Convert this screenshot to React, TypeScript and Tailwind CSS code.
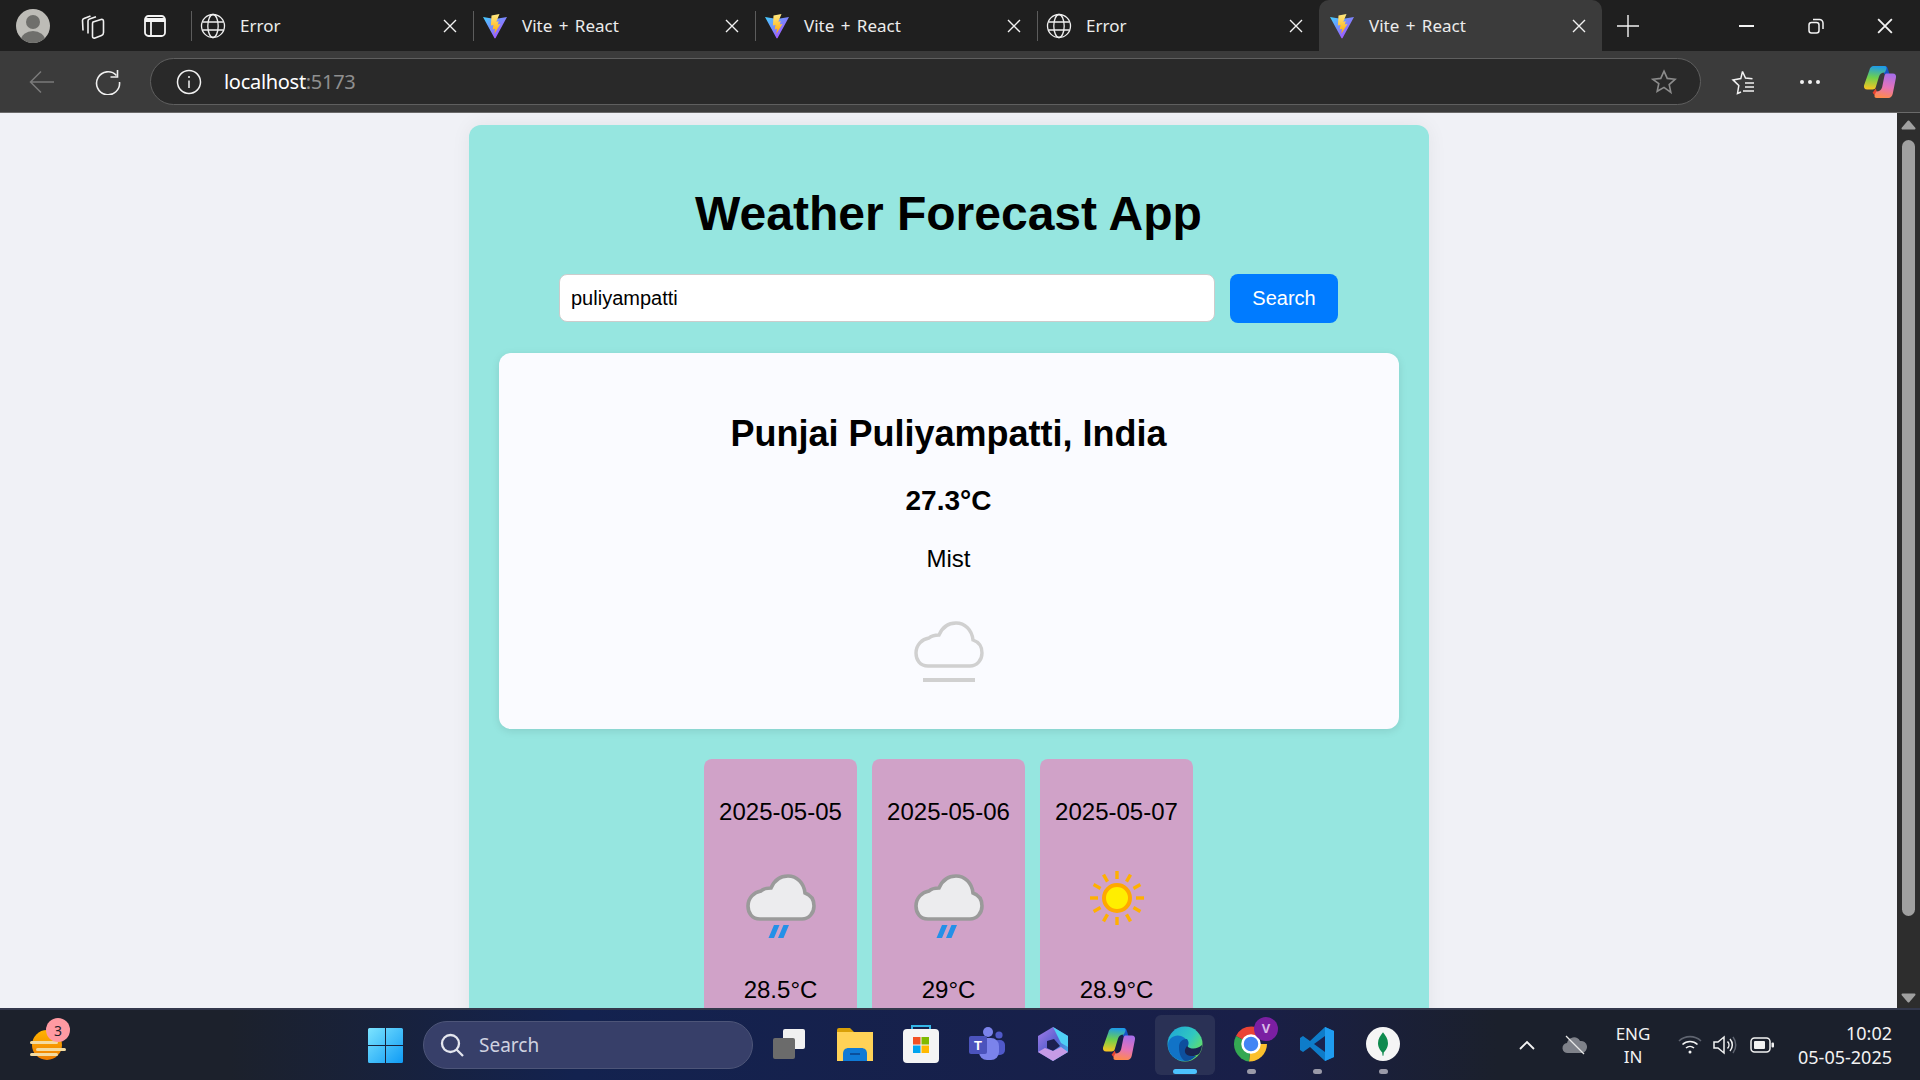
import type { ReactNode } from "react";

const FORECAST = [
  { date: "2025-05-05", temp: "28.5°C", icon: "rain" },
  { date: "2025-05-06", temp: "29°C", icon: "rain" },
  { date: "2025-05-07", temp: "28.9°C", icon: "sun" },
];

const TABS = [
  { title: "Error", kind: "globe" },
  { title: "Vite + React", kind: "vite" },
  { title: "Vite + React", kind: "vite" },
  { title: "Error", kind: "globe" },
];

// 68x45 cloud outline shared by the main card and the forecast cards
const CLOUD_PATH =
  "M13 44C5 44 1 38 1 31 1 23 7 17 14 16 16 14 20 13 24 13 27 6 33 1 41 1 50 1 57 8 58 18 64 20 67 25 67 31 67 38 62 44 55 44Z";

function GlobeIcon() {
  return (
    <svg width="26" height="26" viewBox="0 0 26 26" fill="none" stroke="#f0f0f0" strokeWidth="1.3">
      <circle cx="13" cy="13" r="11.5" />
      <ellipse cx="13" cy="13" rx="5.2" ry="11.5" />
      <path d="M2.5 9h21M2.5 17h21" />
    </svg>
  );
}

function ViteIcon() {
  return (
    <svg width="26" height="26" viewBox="0 0 26 26">
      <defs>
        <linearGradient id="viteA" x1="0" y1="0" x2="1" y2="1">
          <stop offset="0" stopColor="#41d1ff" />
          <stop offset="1" stopColor="#bd34fe" />
        </linearGradient>
        <linearGradient id="viteB" x1="0" y1="0" x2="0" y2="1">
          <stop offset="0" stopColor="#ffea83" />
          <stop offset="1" stopColor="#ffa800" />
        </linearGradient>
      </defs>
      <path d="M1 4l12 2 12-2-11.4 21a.7.7 0 0 1-1.2 0z" fill="url(#viteA)" />
      <path d="M17.5 1l-8 1.5-.6 10 2.6-.5-.8 4.4 2.5-.6-1 5.2 6.3-10-2.8.5 1-3.2-2.4.4z" fill="url(#viteB)" />
    </svg>
  );
}

function CloseGlyph({ size = 14, width = 1.4 }: { size?: number; width?: number }) {
  return (
    <svg width={size} height={size} viewBox="0 0 14 14" stroke="#f2f2f2" strokeWidth={width} fill="none">
      <path d="M1 1l12 12M13 1L1 13" />
    </svg>
  );
}

function Tab({ title, kind, active }: { title: string; kind: string; active?: boolean }) {
  return (
    <div
      className={
        active
          ? "flex h-[51px] w-[283px] shrink-0 items-center rounded-t-[10px] bg-[#3b3b3b] pl-[10px] pr-[6px]"
          : "relative flex h-[51px] w-[282px] shrink-0 items-center pl-[9px] pr-[6px]"
      }
    >
      {!active && <div className="absolute left-0 top-[11px] h-[30px] w-px bg-[#5c5c5c]" />}
      {kind === "vite" ? <ViteIcon /> : <GlobeIcon />}
      <span className="ml-[14px] flex-1 text-[17px] leading-none [word-spacing:2px] text-[#ececec]">{title}</span>
      <span className="mr-[6px] flex w-[22px] justify-center">
        <CloseGlyph />
      </span>
    </div>
  );
}

function Copilot({ size, id }: { size: number; id: string }) {
  return (
    <svg width={size} height={size} viewBox="0 0 32 32">
      <defs>
        <linearGradient id={`${id}A`} x1="0.5" y1="0" x2="0.4" y2="1">
          <stop offset="0" stopColor="#1e9be8" />
          <stop offset="0.5" stopColor="#6fd04c" />
          <stop offset="1" stopColor="#f7c522" />
        </linearGradient>
        <linearGradient id={`${id}B`} x1="0.6" y1="0" x2="0.4" y2="1">
          <stop offset="0" stopColor="#a86ee8" />
          <stop offset="0.55" stopColor="#e573b8" />
          <stop offset="1" stopColor="#ff8a4c" />
        </linearGradient>
      </defs>
      <path d="M18 1h2c2 0 3 1 3.500 3l1.500 5h-5z" fill="#1553c7" />
      <path d="M9 26l3-4 3 9c-2 0-3-1-3.500-2z" fill="#e8432e" />
      <path d="M10 1h10c2 0 2.500 1 2 3l-1.500 3c-3 0-4.500 1-5.500 4l-3 10c-.5 1.500-1.500 2-3 2H4c-2.500 0-3.500-1.500-3-4L6 5c.5-2.500 2-4 4-4z" fill={`url(#${id}A)`} />
      <path d="M22 8h6c2.500 0 3.500 1.500 3 4l-3 15c-.5 2.500-2 4-4 4H13c-2 0-2.500-1-2-3l1.500-3c3 0 4.500-1 5.500-4l2-10c.3-1.500 1-3 2-3z" fill={`url(#${id}B)`} />
    </svg>
  );
}

function TabStrip() {
  return (
    <div className="flex h-[51px] shrink-0 items-center bg-[#1f1f1f]">
      <div className="flex w-[191px] shrink-0 items-center">
        <div className="ml-[16px] flex h-[34px] w-[34px] items-end justify-center overflow-hidden rounded-full bg-[#bdbcb7]">
          <svg width="34" height="34" viewBox="0 0 34 34" fill="#6f6f6c">
            <circle cx="17" cy="13" r="7" />
            <ellipse cx="17" cy="31" rx="12" ry="9" />
          </svg>
        </div>
        <svg className="ml-[29px]" width="26" height="26" viewBox="0 0 26 26" fill="none" stroke="#f0f0f0" strokeWidth="1.6">
          <path d="M14 9l8-2.500c1.500-.5 2.500.3 2.500 2v11c0 1.500-.7 2.500-2 3l-6.500 2.500c-1.500.5-2.500-.2-2.500-1.800V11c0-1 .3-1.700.5-2z" />
          <path d="M9 20.500V8c0-1 .5-1.800 1.500-2.100L17 3.700" />
          <path d="M4 17.500L3.500 7.500c0-1 .5-1.600 1.500-2L11.500 3" />
        </svg>
        <svg className="ml-[38px]" width="24" height="24" viewBox="0 0 24 24" fill="none" stroke="#f4f4f4" strokeWidth="1.8">
          <rect x="2" y="2" width="20" height="20" rx="3.500" />
          <path d="M2 6h20" strokeWidth="4" />
          <path d="M8 8v14" />
        </svg>
      </div>
      {TABS.map((tab, i) => (
        <Tab key={i} title={tab.title} kind={tab.kind} />
      ))}
      <Tab title="Vite + React" kind="vite" active />
      <svg className="ml-[15px]" width="22" height="22" viewBox="0 0 22 22" stroke="#f2f2f2" strokeWidth="1.4">
        <path d="M11 0v22M0 11h22" />
      </svg>
      <div className="ml-auto flex items-center">
        <span className="flex w-[69px] justify-center">
          <span className="block h-[2px] w-[15px] bg-[#f2f2f2]" />
        </span>
        <span className="flex w-[69px] justify-center">
          <svg width="16" height="16" viewBox="0 0 16 16" fill="none" stroke="#f2f2f2" strokeWidth="1.5">
            <rect x="1" y="4.500" width="10" height="10.500" rx="2.500" />
            <path d="M5 1.500h6.500A3.500 3.500 0 0 1 15 5v6" />
          </svg>
        </span>
        <span className="flex w-[70px] justify-center pr-[1px]">
          <CloseGlyph size={16} width={1.6} />
        </span>
      </div>
    </div>
  );
}

function Toolbar() {
  return (
    <div className="flex h-[62px] shrink-0 items-center border-b border-b-[#6a6a6a] bg-[#3b3b3b]">
      <span className="flex w-[84px] justify-center">
        <svg width="26" height="26" viewBox="0 0 26 26" fill="none" stroke="#7a7a7a" strokeWidth="1.5">
          <path d="M25 13H1.500M12 2.500L1.500 13 12 23.500" />
        </svg>
      </span>
      <span className="flex w-[48px] justify-center">
        <svg width="26" height="26" viewBox="0 0 26 26" fill="none" stroke="#f0f0f0" strokeWidth="1.6">
          <path d="M21.500 6.500A11.500 11.500 0 1 0 24.500 13" />
          <path d="M22.500 1v7h-7" />
        </svg>
      </span>
      <div className="ml-[18px] flex h-[47px] w-[1551px] items-center rounded-full border border-[#5f5f5f] bg-[#292929]">
        <svg className="ml-[25px]" width="26" height="26" viewBox="0 0 26 26" fill="none" stroke="#f2f2f2" strokeWidth="1.5">
          <circle cx="13" cy="13" r="11.500" />
          <path d="M13 11.500V19M13 7v2" />
        </svg>
        <span className="ml-[22px] text-[20px] tracking-[-0.3px] text-white">
          localhost<span className="text-[#8f8f8f]">:5173</span>
        </span>
        <svg className="ml-auto mr-[23px]" width="26" height="26" viewBox="0 0 24 24" fill="none" stroke="#8c8c8c" strokeWidth="1.5">
          <path d="M12 2l3 6.700 7.200.8-5.400 4.900 1.500 7.200L12 17l-6.300 3.600 1.500-7.200L1.800 9.500 9 8.700z" />
        </svg>
      </div>
      <svg className="ml-[29px]" width="26" height="26" viewBox="0 0 26 26" fill="none" stroke="#f2f2f2" strokeWidth="1.5">
        <path d="M12.500 2.500l3 6.500 7 .8M11 23l-3.500 1.500 1.300-8-5.800-5.600 7.800-1.300L12.500 2.500M15 14h9M15 18h9M13 22h11" />
      </svg>
      <span className="ml-[44px] flex gap-[4px]">
        <span className="h-[4px] w-[4px] rounded-full bg-[#f2f2f2]" />
        <span className="h-[4px] w-[4px] rounded-full bg-[#f2f2f2]" />
        <span className="h-[4px] w-[4px] rounded-full bg-[#f2f2f2]" />
      </span>
      <span className="ml-[43px]">
        <Copilot size={34} id="copTool" />
      </span>
    </div>
  );
}

function RainIcon() {
  return (
    <svg width="68" height="64" viewBox="0 0 68 64" className="mt-[25px] overflow-visible">
      <path d={CLOUD_PATH} fill="#ececee" stroke="#9a9a9a" strokeWidth="3.600" />
      <path d="M27 50h5.500L27 63h-5.500zM36.500 50H42L36.500 63H31z" fill="#2490e8" />
    </svg>
  );
}

function SunIcon() {
  const angles = [0, 30, 60, 90, 120, 150, 180, 210, 240, 270, 300, 330];
  return (
    <svg width="56" height="56" viewBox="0 0 56 56" className="mt-[20px]">
      {angles.map((a) => (
        <rect key={a} x="26.300" y="1" width="3.400" height="8" fill="#ffb000" transform={`rotate(${a} 28 28)`} />
      ))}
      <circle cx="28" cy="28" r="13" fill="#ffee00" stroke="#ffa800" strokeWidth="4" />
    </svg>
  );
}

function ForecastCard({ date, temp, icon }: { date: string; temp: string; icon: string }) {
  return (
    <div className="flex w-[153px] shrink-0 flex-col items-center rounded-[8px] bg-[#d0a2c8] pb-[30px] pt-[39px] text-center text-[24px] leading-[1.15] text-black">
      <p>{date}</p>
      <div className="mt-[24px] flex h-[100px] w-[100px] items-start justify-center">
        {icon === "sun" ? <SunIcon /> : <RainIcon />}
      </div>
      <p className="mt-[26px]">{temp}</p>
    </div>
  );
}

function WeatherApp() {
  return (
    <div className="mx-auto mt-[12px] w-[960px] rounded-[12px] bg-[#96e6e0] px-[30px] pb-[30px] pt-[61px] text-center font-['Liberation_Sans',Arial,sans-serif] text-black shadow-[0_0_20px_rgba(0,0,0,0.06)]">
      <h1 className="text-[48px] font-bold leading-[1.15]">Weather Forecast App</h1>
      <div className="mt-[33px] flex justify-center gap-[15px]">
        <input
          readOnly
          value="puliyampatti"
          className="h-[48px] w-[656px] rounded-[8px] border border-[#cccccc] bg-white px-[11px] text-[20px] text-black outline-none"
        />
        <button className="h-[49px] w-[108px] rounded-[8px] bg-[#007bff] pb-[1px] text-[20px] text-white">Search</button>
      </div>
      <div className="mt-[30px] flex h-[376px] flex-col items-center rounded-[12px] bg-[#fafbff] pt-[60px] shadow-[0_2px_8px_rgba(0,0,0,0.1)]">
        <h2 className="text-[36px] font-bold leading-[1.15]">Punjai Puliyampatti, India</h2>
        <p className="mt-[30px] text-[28px] font-bold leading-[1.15]">27.3°C</p>
        <p className="mt-[28px] text-[24px] leading-[1.15]">Mist</p>
        <svg className="mt-[28px]" width="100" height="100" viewBox="0 0 100 100" fill="none" stroke="#d0d0d0">
          <path d={CLOUD_PATH} transform="translate(16 22)" strokeWidth="3.400" />
          <path d="M24 80h52" strokeWidth="4" />
        </svg>
      </div>
      <div className="mt-[30px] flex justify-center gap-[15px]">
        {FORECAST.map((day) => (
          <ForecastCard key={day.date} {...day} />
        ))}
      </div>
    </div>
  );
}

function Scrollbar() {
  return (
    <div className="flex w-[23px] shrink-0 flex-col items-center bg-[#2d2d2d]">
      <svg className="mt-[7px]" width="15" height="10" viewBox="0 0 15 10" fill="#a0a0a0" stroke="#a0a0a0" strokeWidth="2" strokeLinejoin="round">
        <path d="M7.500 1.500L1.500 8.500h12z" />
      </svg>
      <span className="mt-[10px] h-[776px] w-[13px] rounded-full bg-[#a0a0a0]" />
      <svg className="mt-[77px]" width="15" height="10" viewBox="0 0 15 10" fill="#a0a0a0" stroke="#a0a0a0" strokeWidth="2" strokeLinejoin="round">
        <path d="M7.500 8.500L1.500 1.500h12z" />
      </svg>
    </div>
  );
}

function TaskIcon({ children, active, dot }: { children: ReactNode; active?: boolean; dot?: boolean }) {
  return (
    <div className="relative flex h-[60px] w-[66px] shrink-0 items-center justify-center pb-[2px]">
      {active && <div className="absolute inset-x-[3px] inset-y-0 rounded-[6px] bg-[#2a3155]" />}
      <div className="relative flex items-center justify-center">{children}</div>
      {active && <div className="absolute bottom-[1px] h-[5px] w-[24px] rounded-full bg-[#4cc2ff]" />}
      {dot && <div className="absolute bottom-[1px] h-[5px] w-[9px] rounded-full bg-[#9a9aa8]" />}
    </div>
  );
}

function TaskbarIcons() {
  return (
    <>
      <TaskIcon>
        <svg width="34" height="34" viewBox="0 0 34 34">
          <rect x="11" y="2" width="22" height="20" rx="2" fill="#f1f1f1" />
          <rect x="1" y="11" width="22" height="21" rx="2" fill="#6b6b6b" />
        </svg>
      </TaskIcon>
      <TaskIcon>
        <svg width="36" height="34" viewBox="0 0 36 34">
          <path d="M0 3a2 2 0 0 1 2-2h11l4 4h19v29H0z" fill="#d9a008" />
          <rect y="5" width="36" height="29" fill="#ffd257" />
          <path d="M6 34v-7c0-4 2-6 6-6h12c4 0 6 2 6 6v7z" fill="#0f7ad6" />
          <rect x="13" y="26" width="10" height="2" fill="#0a4f9c" />
        </svg>
      </TaskIcon>
      <TaskIcon>
        <svg width="36" height="40" viewBox="0 0 36 40">
          <path d="M9 8V2h18v6" fill="none" stroke="#35b7e8" strokeWidth="2" />
          <rect y="5" width="36" height="34" rx="4" fill="#f4f4f4" />
          <rect x="10" y="13" width="7.500" height="7.500" fill="#f25022" />
          <rect x="18.500" y="13" width="7.500" height="7.500" fill="#7fba00" />
          <rect x="10" y="21.500" width="7.500" height="7.500" fill="#00a4ef" />
          <rect x="18.500" y="21.500" width="7.500" height="7.500" fill="#ffb900" />
        </svg>
      </TaskIcon>
      <TaskIcon>
        <svg width="36" height="36" viewBox="0 0 36 36">
          <circle cx="19" cy="6" r="5" fill="#7b83eb" />
          <circle cx="30" cy="9" r="3.600" fill="#5059c9" />
          <rect x="25" y="14" width="11" height="15" rx="5" fill="#5059c9" />
          <rect x="10" y="12" width="20" height="22" rx="8" fill="#7b83eb" />
          <rect x="0" y="10" width="18" height="18" rx="2" fill="#4b53bc" />
          <text x="9" y="24" textAnchor="middle" fontSize="13" fontWeight="700" fill="#fff" fontFamily="Liberation Sans, sans-serif">
            T
          </text>
        </svg>
      </TaskIcon>
      <TaskIcon>
        <svg width="34" height="36" viewBox="0 0 34 36">
          <defs>
            <linearGradient id="msA" x1="0" y1="0" x2="1" y2="1">
              <stop offset="0" stopColor="#a57ee8" />
              <stop offset="0.5" stopColor="#5a5fd0" />
              <stop offset="1" stopColor="#35c6f0" />
            </linearGradient>
          </defs>
          <path d="M17 1l15 9v16l-15 9-15-9V10z" fill="url(#msA)" />
          <path d="M11 15l7-2 6 7-7 5-6-3z" fill="#1c2050" />
          <path d="M2 26l7-4 8 3 8-4 7 5-15 9z" fill="#c69be6" />
          <path d="M17 1l15 9v11l-7-4z" fill="#4fd0f5" />
        </svg>
      </TaskIcon>
      <TaskIcon>
        <Copilot size={34} id="copTask" />
      </TaskIcon>
      <TaskIcon active>
        <svg width="36" height="36" viewBox="0 0 36 36">
          <defs>
            <linearGradient id="edgeA" x1="0" y1="0" x2="1" y2="0.7">
              <stop offset="0" stopColor="#1ea3d8" />
              <stop offset="0.6" stopColor="#30c8c0" />
              <stop offset="1" stopColor="#6be25a" />
            </linearGradient>
          </defs>
          <circle cx="18" cy="18" r="17.500" fill="url(#edgeA)" />
          <path d="M1 19c0-7 7-11 13-9 6 2 8 7 6 11-3 6 2 10 9 9-3 3-7 5-11 5C8 35 1 28 1 19z" fill="#1173c7" />
          <path d="M12 21c0-5 3-8 8-8 3 4 1 7 0 9-2 5 3 9 9 8-3 3-7 5-11 5-5-3-6-9-6-14z" fill="#0d4f9e" />
          <path d="M20 20c4 4 11 3 15-1 0 3-1 6-3 9-4 3-13 3-14-2-.5-2 .6-4 2-6z" fill="#1a2350" />
        </svg>
      </TaskIcon>
      <TaskIcon dot>
        <div className="relative">
          <svg width="36" height="36" viewBox="0 0 36 36">
            <path d="M18 18L3 10A17.500 17.500 0 0 1 34 10H18z" fill="#ea4335" />
            <path d="M18 18h16a17.500 17.500 0 0 1-18 17.500z" fill="#fbc02d" />
            <path d="M18 18L16 35.500A17.500 17.500 0 0 1 3 10z" fill="#34a853" />
            <circle cx="18" cy="18" r="8.500" fill="#4285f4" stroke="#fff" strokeWidth="2.500" />
          </svg>
          <span className="absolute -right-[9px] -top-[9px] flex h-[24px] w-[24px] items-center justify-center rounded-full bg-[#7b1fa2] text-[13px] font-bold text-[#d9b8e8]">
            V
          </span>
        </div>
      </TaskIcon>
      <TaskIcon dot>
        <svg width="36" height="36" viewBox="0 0 36 36">
          <path d="M26 1l9 4v26l-9 4-15-14-7 5-3-2v-12l3-2 7 5z" fill="#0e7cc9" />
          <path d="M26 1l9 4v26l-9 4z" fill="#1f9cf0" />
          <path d="M26 10L15 18l11 8z" fill="#1a2350" />
        </svg>
      </TaskIcon>
      <TaskIcon dot>
        <span className="flex h-[34px] w-[34px] items-center justify-center rounded-full bg-[#f5f5f5]">
          <svg width="10" height="28" viewBox="0 0 12 28">
            <path d="M6 0c3 4 6 8 6 13s-3 9-5 11l-.5 4h-1L5 24C3 22 0 18 0 13S3 4 6 0z" fill="#0f8a4e" />
          </svg>
        </span>
      </TaskIcon>
    </>
  );
}

function Tray() {
  return (
    <div className="ml-auto flex items-center text-[#f2f2f2]">
      <svg width="18" height="12" viewBox="0 0 18 12" fill="none" stroke="#f5f5f5" strokeWidth="1.8">
        <path d="M2 10l7-7 7 7" />
      </svg>
      <svg className="ml-[26px]" width="26" height="20" viewBox="0 0 26 20">
        <path d="M6 18a5 5 0 0 1-1-10 7 7 0 0 1 13-2 6 6 0 0 1 2 12z" fill="#7f828a" />
        <path d="M4 1l18 18" stroke="#e8e8e8" strokeWidth="1.300" />
      </svg>
      <div className="ml-[15px] w-[60px] text-center text-[17px] leading-[23px]">
        <div>ENG</div>
        <div>IN</div>
      </div>
      <svg className="ml-[15px]" width="24" height="20" viewBox="0 0 24 20" fill="none" stroke="#f2f2f2" strokeWidth="1.600">
        <path d="M1 6a16 16 0 0 1 22 0" stroke="#5f6470" />
        <path d="M4.500 9.500a11 11 0 0 1 15 0M8 13a6 6 0 0 1 8 0" />
        <circle cx="12" cy="17" r="1.500" fill="#f2f2f2" stroke="none" />
      </svg>
      <svg className="ml-[11px]" width="24" height="20" viewBox="0 0 24 20" fill="none" stroke="#f2f2f2" strokeWidth="1.500">
        <path d="M1 7v6h4l6 5V2L5 7z" />
        <path d="M14.500 6.500a5 5 0 0 1 0 7M17 4a9 9 0 0 1 0 12" />
        <path d="M20 2a13 13 0 0 1 0 16" stroke="#5f6470" />
      </svg>
      <svg className="ml-[13px]" width="24" height="16" viewBox="0 0 24 16" fill="none" stroke="#f2f2f2" strokeWidth="1.500">
        <rect x="1" y="1" width="19" height="14" rx="3.500" />
        <rect x="4" y="4" width="11" height="8" rx="1" fill="#f2f2f2" stroke="none" />
        <rect x="21.500" y="5.500" width="2.500" height="5" rx="1" fill="#f2f2f2" stroke="none" />
      </svg>
      <div className="ml-[24px] mr-[28px] text-right text-[18px] leading-[24px]">
        <div>10:02</div>
        <div>05-05-2025</div>
      </div>
    </div>
  );
}

function Taskbar() {
  return (
    <div className="flex h-[72px] shrink-0 items-center border-t-2 border-t-[#33384c] bg-[linear-gradient(90deg,#1c212c_0%,#1c212c_12%,#13224f_30%,#191f48_65%,#1b202c_78%,#1b202c_100%)]">
      <div className="relative ml-[32px] h-[30px] w-[30px] rounded-full bg-[linear-gradient(180deg,#ffb300,#ef7d00)]">
        <span className="absolute left-[-2px] top-[11px] h-[3px] w-[28px] rounded-full bg-[#f4dba0]" />
        <span className="absolute left-[4px] top-[18px] h-[3px] w-[30px] rounded-full bg-[#f4dba0]" />
        <span className="absolute left-[-2px] top-[23px] h-[3px] w-[28px] rounded-full bg-[#f4dba0]" />
        <span className="absolute left-[14px] top-[-12px] flex h-[24px] w-[24px] items-center justify-center rounded-full bg-[#ff9aa2] text-[14px] text-[#1c212c]">
          3
        </span>
      </div>
      <svg className="ml-[306px]" width="35" height="35" viewBox="0 0 35 35">
        <defs>
          <linearGradient id="winA" x1="0" y1="0" x2="1" y2="1">
            <stop offset="0" stopColor="#7ce4ff" />
            <stop offset="1" stopColor="#0f9bf5" />
          </linearGradient>
        </defs>
        <path d="M1.500 0H17v17H0V1.500A1.500 1.500 0 0 1 1.500 0zM18 0h15.500A1.500 1.500 0 0 1 35 1.500V17H18zM0 18h17v17H1.500A1.500 1.500 0 0 1 0 33.500zM18 18h17v15.500a1.500 1.500 0 0 1-1.500 1.500H18z" fill="url(#winA)" />
      </svg>
      <div className="ml-[20px] flex h-[48px] w-[330px] shrink-0 items-center rounded-full border border-[#4d5578] bg-[#373f69]">
        <svg className="ml-[16px]" width="24" height="24" viewBox="0 0 24 24" fill="none" stroke="#e4e6ee" strokeWidth="2.300">
          <circle cx="10.500" cy="10.500" r="8.500" />
          <path d="M16.500 16.500L23 23" />
        </svg>
        <span className="ml-[15px] text-[19px] text-[#cfd2e0]">Search</span>
      </div>
      <div className="ml-[3px] flex items-center">
        <TaskbarIcons />
      </div>
      <Tray />
    </div>
  );
}

export default function App() {
  return (
    <div className="flex h-screen w-full flex-col overflow-hidden bg-[#f0f1f6] font-['Noto_Sans',sans-serif]">
      <TabStrip />
      <Toolbar />
      <div className="flex min-h-0 flex-1">
        <main className="min-w-0 flex-1 overflow-hidden">
          <WeatherApp />
        </main>
        <Scrollbar />
      </div>
      <Taskbar />
    </div>
  );
}
